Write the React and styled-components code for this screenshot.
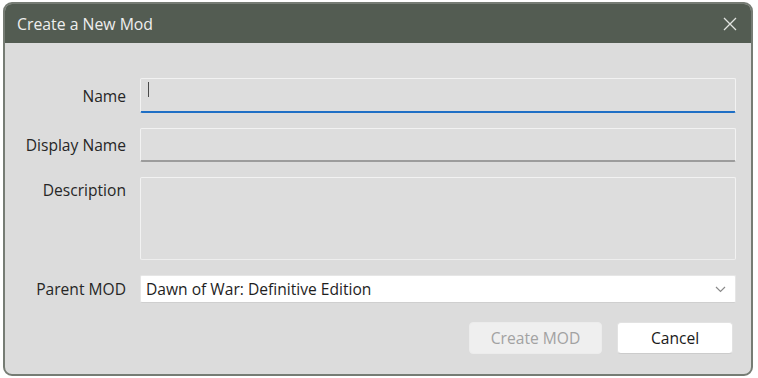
import React from "react";
import styled, { createGlobalStyle } from "styled-components";

const Global = createGlobalStyle`
  html, body { margin: 0; background: #ffffff; }
  body { font-family: "Open Sans", "Noto Sans", sans-serif; }
`;

const Window = styled.div`
  box-sizing: border-box;
  margin: 2px 0 0 3px;
  width: 750px;
  height: 374px;
  border: 2px solid #767c74;
  border-radius: 9px;
  overflow: hidden;
  background: #dcdcdc;
  display: flex;
  flex-direction: column;
`;

const TitleBar = styled.div`
  height: 39px;
  flex: none;
  background: #535c52;
  display: flex;
  align-items: center;
  justify-content: space-between;
  padding: 0 13px 0 12px;
  color: #eeeeee;
  font-size: 15.8px;
`;

const Close = styled.button`
  border: 0;
  background: none;
  padding: 0;
  width: 16px;
  height: 16px;
  display: flex;
  align-items: center;
  justify-content: center;
  cursor: pointer;
`;

const Form = styled.div`
  flex: 1;
  display: grid;
  grid-template-columns: 121px 1fr;
  column-gap: 14px;
  row-gap: 15px;
  padding: 35px 15px 0 0;
  align-content: start;
`;

const Label = styled.label`
  text-align: right;
  font-size: 15.6px;
  color: #262626;
  white-space: nowrap;
  align-self: ${(p) => (p.$top ? "start" : "center")};
  padding-top: ${(p) => (p.$top ? "2px" : "0")};
`;

const Field = styled.div`
  box-sizing: border-box;
  height: ${(p) => p.$h}px;
  background: #dddddd;
  border: 1px solid #f2f2f2;
  border-bottom: ${(p) =>
    p.$focus ? "2px solid #1f6fc5" : p.$dark ? "2px solid #9c9c9c" : "1px solid #eeeeee"};
  border-radius: 2px;
  position: relative;
`;

const Caret = styled.span`
  position: absolute;
  left: 7px;
  top: 3px;
  width: 1px;
  height: 15px;
  background: #4a4a4a;
`;

const Select = styled.div`
  box-sizing: border-box;
  height: 28px;
  background: #ffffff;
  border: 1px solid #e6e6e6;
  border-bottom-color: #cfcfcf;
  border-radius: 2px;
  display: flex;
  align-items: center;
  justify-content: space-between;
  padding: 0 9px 0 5px;
  font-size: 15.6px;
  color: #1e1e1e;
`;

const Buttons = styled.div`
  grid-column: 2;
  display: flex;
  justify-content: flex-end;
  gap: 15px;
  padding: 4px 3px 0 0;
`;

const Button = styled.button`
  box-sizing: border-box;
  width: ${(p) => p.$w}px;
  height: 32px;
  border-radius: 4px;
  border: 1px solid ${(p) => (p.disabled ? "#ececec" : "#e2e2e2")};
  border-bottom-color: ${(p) => (p.disabled ? "#ececec" : "#cccccc")};
  background: ${(p) => (p.disabled ? "#efefef" : "#ffffff")};
  color: ${(p) => (p.disabled ? "#a2a2a2" : "#1a1a1a")};
  font-family: "Open Sans", "Noto Sans", sans-serif;
  font-size: 15.6px;
  padding: 0;
`;

export default function App() {
  return (
    <>
      <Global />
      <Window>
        <TitleBar>
          <span>Create a New Mod</span>
          <Close aria-label="Close">
            <svg width="14" height="14" viewBox="0 0 14 14">
              <path d="M1 1L13 13M13 1L1 13" stroke="#e2e4e1" strokeWidth="1.3" />
            </svg>
          </Close>
        </TitleBar>
        <Form>
          <Label>Name</Label>
          <Field $h={35} $focus>
            <Caret />
          </Field>

          <Label>Display Name</Label>
          <Field $h={34} $dark />

          <Label $top>Description</Label>
          <Field $h={83} />

          <Label>Parent MOD</Label>
          <Select>
            <span>Dawn of War: Definitive Edition</span>
            <svg width="11" height="7" viewBox="0 0 11 7">
              <path d="M1 1L5.5 5.5L10 1" stroke="#8a8a8a" strokeWidth="1.2" fill="none" />
            </svg>
          </Select>

          <Buttons>
            <Button $w={133} disabled>
              Create MOD
            </Button>
            <Button $w={116}>Cancel</Button>
          </Buttons>
        </Form>
      </Window>
    </>
  );
}
